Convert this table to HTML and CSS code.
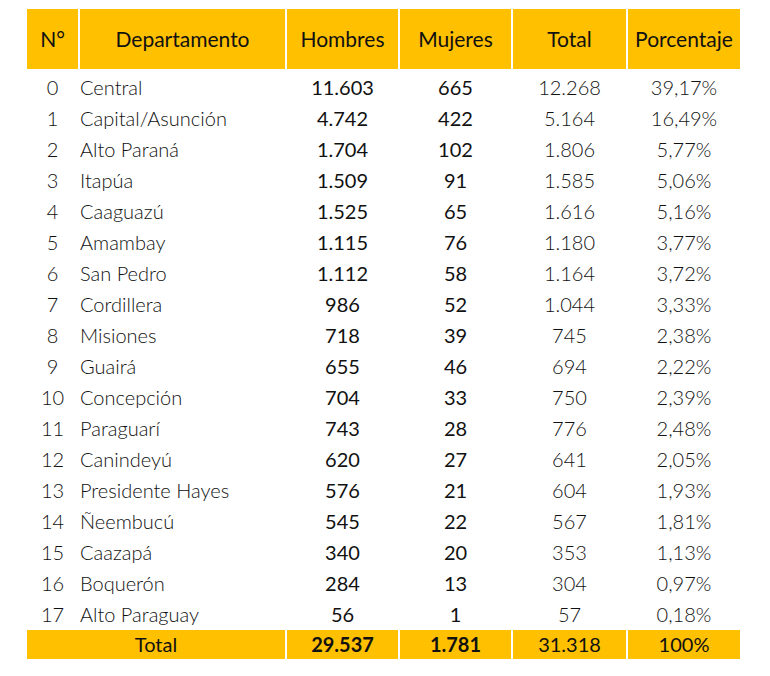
FILE: index.html
```html
<!DOCTYPE html>
<html lang="es">
<head>
<meta charset="utf-8">
<link rel="stylesheet" href="styles.css">
</head>
<body>
<div class="table">
  <div class="row head">
    <div class="c">N°</div><div class="c">Departamento</div><div class="c">Hombres</div><div class="c">Mujeres</div><div class="c">Total</div><div class="c">Porcentaje</div>
  </div>
  <div class="row"><div class="c">0</div><div class="l">Central</div><div class="c m">11.603</div><div class="c m">665</div><div class="c">12.268</div><div class="c">39,17%</div></div>
  <div class="row"><div class="c">1</div><div class="l">Capital/Asunción</div><div class="c m">4.742</div><div class="c m">422</div><div class="c">5.164</div><div class="c">16,49%</div></div>
  <div class="row"><div class="c">2</div><div class="l">Alto Paraná</div><div class="c m">1.704</div><div class="c m">102</div><div class="c">1.806</div><div class="c">5,77%</div></div>
  <div class="row"><div class="c">3</div><div class="l">Itapúa</div><div class="c m">1.509</div><div class="c m">91</div><div class="c">1.585</div><div class="c">5,06%</div></div>
  <div class="row"><div class="c">4</div><div class="l">Caaguazú</div><div class="c m">1.525</div><div class="c m">65</div><div class="c">1.616</div><div class="c">5,16%</div></div>
  <div class="row"><div class="c">5</div><div class="l">Amambay</div><div class="c m">1.115</div><div class="c m">76</div><div class="c">1.180</div><div class="c">3,77%</div></div>
  <div class="row"><div class="c">6</div><div class="l">San Pedro</div><div class="c m">1.112</div><div class="c m">58</div><div class="c">1.164</div><div class="c">3,72%</div></div>
  <div class="row"><div class="c">7</div><div class="l">Cordillera</div><div class="c m">986</div><div class="c m">52</div><div class="c">1.044</div><div class="c">3,33%</div></div>
  <div class="row"><div class="c">8</div><div class="l">Misiones</div><div class="c m">718</div><div class="c m">39</div><div class="c">745</div><div class="c">2,38%</div></div>
  <div class="row"><div class="c">9</div><div class="l">Guairá</div><div class="c m">655</div><div class="c m">46</div><div class="c">694</div><div class="c">2,22%</div></div>
  <div class="row"><div class="c">10</div><div class="l">Concepción</div><div class="c m">704</div><div class="c m">33</div><div class="c">750</div><div class="c">2,39%</div></div>
  <div class="row"><div class="c">11</div><div class="l">Paraguarí</div><div class="c m">743</div><div class="c m">28</div><div class="c">776</div><div class="c">2,48%</div></div>
  <div class="row"><div class="c">12</div><div class="l">Canindeyú</div><div class="c m">620</div><div class="c m">27</div><div class="c">641</div><div class="c">2,05%</div></div>
  <div class="row"><div class="c">13</div><div class="l">Presidente Hayes</div><div class="c m">576</div><div class="c m">21</div><div class="c">604</div><div class="c">1,93%</div></div>
  <div class="row"><div class="c">14</div><div class="l">Ñeembucú</div><div class="c m">545</div><div class="c m">22</div><div class="c">567</div><div class="c">1,81%</div></div>
  <div class="row"><div class="c">15</div><div class="l">Caazapá</div><div class="c m">340</div><div class="c m">20</div><div class="c">353</div><div class="c">1,13%</div></div>
  <div class="row"><div class="c">16</div><div class="l">Boquerón</div><div class="c m">284</div><div class="c m">13</div><div class="c">304</div><div class="c">0,97%</div></div>
  <div class="row"><div class="c">17</div><div class="l">Alto Paraguay</div><div class="c m">56</div><div class="c m">1</div><div class="c">57</div><div class="c">0,18%</div></div>
  <div class="row foot">
    <div class="c span2">Total</div><div class="c b">29.537</div><div class="c b">1.781</div><div class="c">31.318</div><div class="c">100%</div>
  </div>
</div>
</body>
</html>
```

FILE: styles.css
```css
html, body {
  margin: 0;
  padding: 0;
  background: #ffffff;
}
body {
  padding: 9px 0 0 27px;
  font-family: "Lato", "Open Sans", sans-serif;
  color: #111111;
}
.table {
  width: 713px;
}
.row {
  display: grid;
  grid-template-columns: 51px 205px 111px 111px 113px 112px;
  column-gap: 2px;
  height: 31px;
  font-size: 20px;
  font-weight: 300;
}
.row > div {
  display: flex;
  align-items: center;
  white-space: nowrap;
  padding-bottom: 2px;
}
.c { justify-content: center; }
.l { justify-content: flex-start; }
.m { font-weight: 400; }
.b { font-weight: 700; }
.head {
  height: 60px;
  margin-bottom: 3px;
  font-size: 21px;
  font-weight: 400;
}
.head > div, .foot > div {
  background: #ffc000;
}
.foot > div {
  padding-bottom: 1px;
}
.foot {
  height: 29px;
  font-weight: 400;
}
.span2 { grid-column: span 2; }
```
